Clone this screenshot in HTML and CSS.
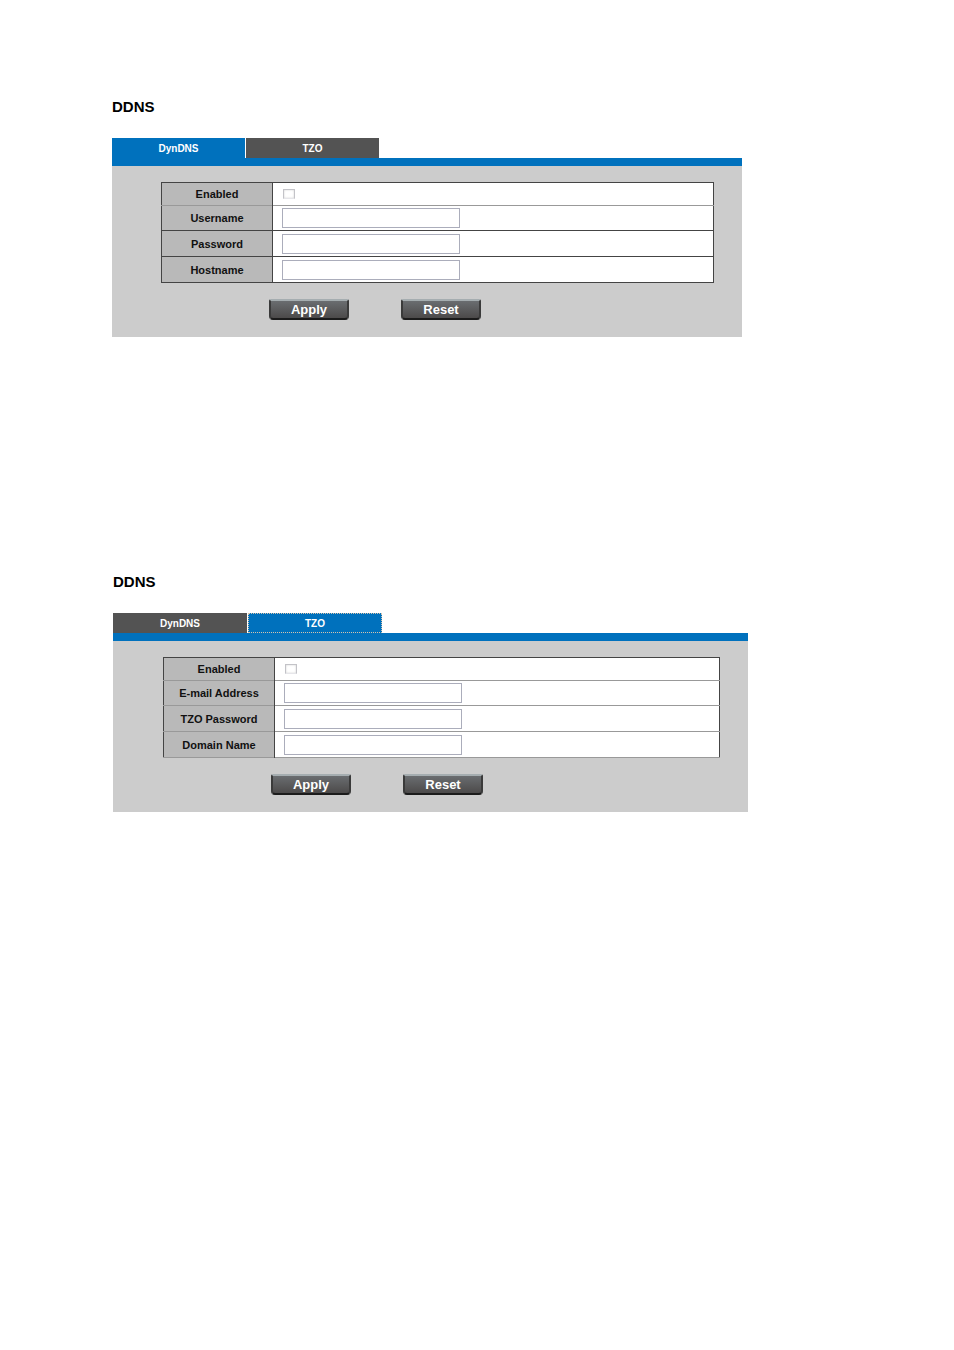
FILE: index.html
```html
<!DOCTYPE html>
<html lang="en">

<head>
    <meta charset="UTF-8">
    <meta name="viewport" content="width=device-width, initial-scale=1.0">
    <title>DDNS</title>
    <link rel="stylesheet" href="styles.css">
</head>

<body>
    <!-- DynDNS settings -->
    <section class="ddns dyndns">
        <h2>DDNS</h2>
        <nav class="tabs">
            <a href="#dyndns" class="tab active">DynDNS</a>
            <a href="#tzo" class="tab">TZO</a>
        </nav>
        <form class="panel" id="dyndns">
            <table class="settings">
                <tr>
                    <th scope="row"><label for="dynEnabled">Enabled</label></th>
                    <td><input type="checkbox" id="dynEnabled"></td>
                </tr>
                <tr>
                    <th scope="row"><label for="dynUser">Username</label></th>
                    <td><input type="text" id="dynUser"></td>
                </tr>
                <tr>
                    <th scope="row"><label for="dynPass">Password</label></th>
                    <td><input type="password" id="dynPass"></td>
                </tr>
                <tr>
                    <th scope="row"><label for="dynHost">Hostname</label></th>
                    <td><input type="text" id="dynHost"></td>
                </tr>
            </table>
            <div class="buttons">
                <button type="submit">Apply</button>
                <button type="reset">Reset</button>
            </div>
        </form>
    </section>

    <!-- TZO settings -->
    <section class="ddns tzo">
        <h2>DDNS</h2>
        <nav class="tabs">
            <a href="#dyndns" class="tab">DynDNS</a>
            <a href="#tzo" class="tab active focused">TZO</a>
        </nav>
        <form class="panel" id="tzo">
            <table class="settings light">
                <tr>
                    <th scope="row"><label for="tzoEnabled">Enabled</label></th>
                    <td><input type="checkbox" id="tzoEnabled"></td>
                </tr>
                <tr>
                    <th scope="row"><label for="tzoMail">E-mail Address</label></th>
                    <td><input type="text" id="tzoMail"></td>
                </tr>
                <tr>
                    <th scope="row"><label for="tzoPass">TZO Password</label></th>
                    <td><input type="password" id="tzoPass"></td>
                </tr>
                <tr>
                    <th scope="row"><label for="tzoDomain">Domain Name</label></th>
                    <td><input type="text" id="tzoDomain"></td>
                </tr>
            </table>
            <div class="buttons">
                <button type="submit">Apply</button>
                <button type="reset">Reset</button>
            </div>
        </form>
    </section>
</body>

</html>
```
FILE: styles.css
```css
* {
    box-sizing: border-box;
}

body {
    margin: 0;
    padding: 97px 112px;
    background-color: #fff;
    color: #111;
    font-family: "Liberation Sans", Arial, sans-serif;
    font-size: 11px;
}

.ddns {
    max-width: 630px;
}

.tzo {
    max-width: 635px;
    margin-top: 235px;
    margin-left: 1px;
}

h2 {
    margin: 0 0 21px;
    color: #000;
    font-size: 15px;
    line-height: 20px;
}

/* tabs */
.tabs {
    display: flex;
    gap: 1px;
    border-bottom: 8px solid #0071bd;
}

.tab {
    width: 133px;
    height: 20px;
    background-color: #535353;
    color: #fff;
    font-size: 10px;
    font-weight: bold;
    line-height: 22px;
    text-align: center;
    text-decoration: none;
}

.tzo .tab {
    width: 134px;
}

.tab.active {
    background-color: #0071bd;
}

.tab.focused {
    outline: 1px dotted #d5c3ad;
    outline-offset: -1px;
}

.panel {
    padding: 16px 28px 17px 49px;
    background-color: #ccc;
}

.tzo .panel {
    padding-left: 50px;
}

/* settings table */
.settings {
    width: 100%;
    border-collapse: collapse;
    border: 1px solid #444;
    background-color: #fff;
}

.settings tr {
    height: 26px;
    border-bottom: 1px solid #444;
}

.settings tr:first-child {
    height: 23px;
    border-bottom-color: #999;
}

.settings tr:nth-child(2) {
    height: 25px;
}

.settings.light tr {
    border-bottom-color: #999;
}

.settings th {
    width: 111px;
    padding: 0;
    border-right: 1px solid #444;
    background-color: #b9b9b9;
}

.settings td {
    padding: 0 9px;
}

.settings input {
    display: block;
    margin: 0;
}

.settings input[type="text"],
.settings input[type="password"] {
    width: 178px;
    height: 20px;
    padding: 1px 4px;
    border: 1px solid #abadbb;
    background-color: #fff;
    font: inherit;
}

.settings input[type="checkbox"] {
    appearance: none;
    width: 12px;
    height: 10px;
    margin-left: 1px;
    border: 1px solid #c3c3c8;
    border-bottom-color: #e6e6ea;
    box-shadow: inset 0 0 2px #ccc;
}

.settings input[type="checkbox"]:checked {
    background-color: #0071bd;
}

/* buttons */
.buttons {
    display: flex;
    gap: 52px;
    margin-top: 16px;
    padding-left: 108px;
}

button {
    width: 80px;
    height: 21px;
    padding: 0;
    border: 2px solid #3a3a3a;
    border-top-color: #a5adb0;
    border-bottom-color: #1b1b1b;
    border-radius: 2px 2px 4px 4px;
    background: linear-gradient(#6a6d70, #4c4a4a);
    color: #fff;
    font-family: inherit;
    font-size: 13px;
    font-weight: bold;
    line-height: 17px;
    cursor: pointer;
}
```
